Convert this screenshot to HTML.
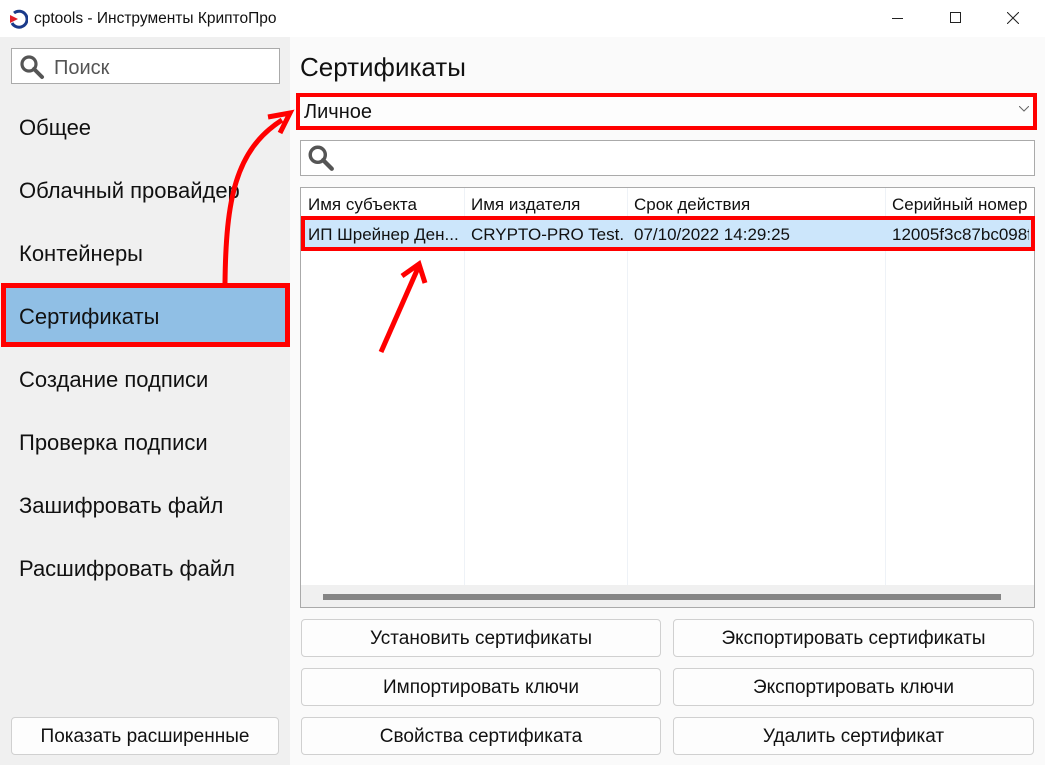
<!DOCTYPE html>
<html><head><meta charset="utf-8"><style>
*{box-sizing:border-box;margin:0;padding:0}
body{width:1045px;height:765px;overflow:hidden;background:#fafafa;font-family:"Liberation Sans","Noto Sans CJK SC",sans-serif;color:#111;position:relative}
.abs{position:absolute}
.title{left:0;top:0;width:1045px;height:37px;background:#fff}
.side{left:0;top:37px;width:290px;height:728px;background:#f0f0f0}
.item{position:absolute;left:19px;font-size:22px;line-height:26px}
.btn{position:absolute;background:#fdfdfd;border:1px solid #d0d0d0;border-radius:4px;font-size:19px;text-align:center;line-height:38px;overflow:hidden;white-space:nowrap}
.th{position:absolute;top:195px;font-size:17px}
.td{position:absolute;top:225px;font-size:17px}
.vl{position:absolute;width:1px;background:#eef2f7;top:188px;height:397px}
</style></head><body>
<div class="abs title"></div>
<svg class="abs" style="left:8px;top:9px" width="20" height="20" viewBox="0 0 20 20"><path d="M6 4 A8 8 0 1 1 4 14" fill="none" stroke="#1a3a8a" stroke-width="3"/><path d="M2 6 L10 10 L2 14Z" fill="#e0202a"/></svg>
<div class="abs" style="left:34px;top:10px;font-size:15.5px">cptools - Инструменты КриптоПро</div>
<div class="abs" style="left:892px;top:18px;width:11px;height:1px;background:#222"></div>
<div class="abs" style="left:950px;top:12px;width:11px;height:11px;border:1px solid #222"></div>
<svg class="abs" style="left:1007px;top:12px" width="12" height="12"><path d="M0 0L12 12M12 0L0 12" stroke="#222" stroke-width="1"/></svg>
<div class="abs side"></div>
<div class="abs" style="left:11px;top:48px;width:269px;height:36px;background:#fff;border:1px solid #aaa"></div>
<svg class="abs" style="left:19px;top:54px" width="26" height="26" viewBox="0 0 26 26"><circle cx="10" cy="10" r="7" fill="none" stroke="#555" stroke-width="3.2"/><path d="M15 15L23 23" stroke="#555" stroke-width="4" stroke-linecap="round"/></svg>
<div class="abs" style="left:54px;top:57px;font-size:20px;color:#555">Поиск</div>
<div class="item" style="top:115px">Общее</div>
<div class="item" style="top:178px">Облачный провайдер</div>
<div class="item" style="top:241px">Контейнеры</div>
<div class="abs" style="left:1px;top:283px;width:289px;height:64px;background:#90bfe5;border:5px solid #f00"></div>
<div class="item" style="top:304px">Сертификаты</div>
<div class="item" style="top:367px">Создание подписи</div>
<div class="item" style="top:430px">Проверка подписи</div>
<div class="item" style="top:493px">Зашифровать файл</div>
<div class="item" style="top:556px">Расшифровать файл</div>
<div class="btn" style="left:11px;top:717px;width:268px;height:38px">Показать расширенные</div>

<div class="abs" style="left:300px;top:52px;font-size:26px">Сертификаты</div>
<div class="abs" style="left:296px;top:93px;width:741px;height:37px;background:#fdfdfd;border:4px solid #f00"></div>
<div class="abs" style="left:304px;top:101px;font-size:20px">Личное</div>
<svg class="abs" style="left:1019px;top:106px" width="10" height="6"><path d="M0 0L5 5L10 0" fill="none" stroke="#666"/></svg>
<div class="abs" style="left:300px;top:140px;width:735px;height:36px;background:#fff;border:1px solid #aaa"></div>
<svg class="abs" style="left:307px;top:144px" width="28" height="28" viewBox="0 0 26 26"><circle cx="10" cy="10" r="7" fill="none" stroke="#555" stroke-width="3.2"/><path d="M15 15L23 23" stroke="#555" stroke-width="4" stroke-linecap="round"/></svg>
<div class="abs" style="left:300px;top:187px;width:735px;height:421px;background:#fff;border:1px solid #aaa"></div>
<div class="vl" style="left:464px"></div><div class="vl" style="left:627px"></div><div class="vl" style="left:885px"></div>
<div class="th" style="left:308px">Имя субъекта</div>
<div class="th" style="left:471px">Имя издателя</div>
<div class="th" style="left:634px">Срок действия</div>
<div class="th" style="left:892px">Серийный номер</div>
<div class="abs" style="left:301px;top:216px;width:734px;height:35px;background:#cce6fb;border:4px solid #f00"></div>
<div class="td" style="left:308px">ИП Шрейнер Ден...</div>
<div class="td" style="left:471px;width:152px;overflow:hidden;white-space:nowrap">CRYPTO-PRO Test...</div>
<div class="td" style="left:634px">07/10/2022 14:29:25</div>
<div class="td" style="left:892px;width:137px;overflow:hidden;white-space:nowrap">12005f3c87bc098f.</div>
<div class="abs" style="left:301px;top:585px;width:733px;height:22px;background:#f0f0f0"></div>
<div class="abs" style="left:323px;top:594px;width:678px;height:6px;background:#858585"></div>

<div class="btn" style="left:301px;top:619px;width:360px;height:38px">Установить сертификаты</div>
<div class="btn" style="left:673px;top:619px;width:361px;height:38px">Экспортировать сертификаты</div>
<div class="btn" style="left:301px;top:668px;width:360px;height:38px">Импортировать ключи</div>
<div class="btn" style="left:673px;top:668px;width:361px;height:38px">Экспортировать ключи</div>
<div class="btn" style="left:301px;top:717px;width:360px;height:38px">Свойства сертификата</div>
<div class="btn" style="left:673px;top:717px;width:361px;height:38px">Удалить сертификат</div>

<svg class="abs" style="left:0;top:0" width="1045" height="765">
<path d="M225 283 C 226 200, 235 150, 282 120" fill="none" stroke="#f00" stroke-width="5"/>
<path d="M268 117 L290 113 L280 133" fill="none" stroke="#f00" stroke-width="5"/>
<path d="M381 352 L418 268" fill="none" stroke="#f00" stroke-width="5"/>
<path d="M402 276 L419 264 L425 283" fill="none" stroke="#f00" stroke-width="5"/>
</svg>
</body></html>
